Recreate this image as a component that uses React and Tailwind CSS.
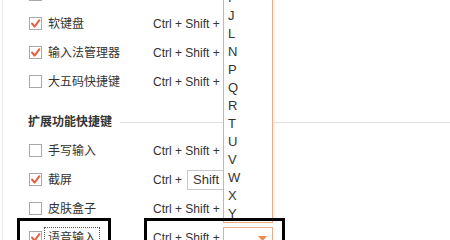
import React from "react";

const font = { fontFamily: '"Liberation Sans", Arial, "Noto Sans CJK SC", sans-serif' };

function Box({ checked }) {
  return (
    <span className="w-[13px] h-[13px] shrink-0 border border-[#a9a9a9] bg-white flex items-center justify-center">
      {checked && (
        <svg width="11" height="11" viewBox="0 0 11 11">
          <path d="M2 5.5 L4.6 8.6 L9.4 2.2" fill="none" stroke="#e8603f" strokeWidth="2" strokeLinecap="round" strokeLinejoin="round" />
        </svg>
      )}
    </span>
  );
}

function Row({ label, checked, keys, focus }) {
  return (
    <div className="h-[29px] flex items-center pl-[29px]">
      <Box checked={checked} />
      <span className="ml-[6px] w-[105px] text-[12px] text-[#333] leading-none">
        <span className={focus ? "outline outline-1 outline-dotted outline-[#555] outline-offset-[3px]" : ""}>{label}</span>
      </span>
      <span className="text-[12px] text-[#333] whitespace-nowrap flex items-center">{keys}</span>
    </div>
  );
}

const letters = ["I", "J", "L", "N", "P", "Q", "R", "T", "U", "V", "W", "X", "Y"];

export default function App() {
  return (
    <div className="relative w-[450px] h-[240px] overflow-hidden bg-white" style={font}>
      <div className="absolute left-[2px] top-0 bottom-0 w-px bg-[#ececec]" />

      <div className="-mt-[20px]">
        <Row label="" checked={false} keys="" />
        <Row label="软键盘" checked keys="Ctrl + Shift +" />
        <Row label="输入法管理器" checked keys="Ctrl + Shift +" />
        <Row label="大五码快捷键" checked={false} keys="Ctrl + Shift +" />

        <div className="h-[28px] mt-[12px] flex items-center pl-[28px]">
          <span className="text-[12px] font-bold text-[#333] leading-none">扩展功能快捷键</span>
          <span className="ml-[8px] flex-1 h-px bg-[#e0e0e0]" />
        </div>

        <Row label="手写输入" checked={false} keys="Ctrl + Shift +" />
        <Row
          label="截屏"
          checked
          keys={
            <>
              <span>Ctrl +</span>
              <span className="ml-[5px] h-[20px] w-[60px] border border-[#c8c8c8] flex items-center pl-[5px] text-[13px]">Shift +</span>
            </>
          }
        />
        <Row label="皮肤盒子" checked={false} keys="Ctrl + Shift +" />
        <Row label="语音输入" checked focus keys="Ctrl + Shift +" />
      </div>

      {/* open dropdown list */}
      <div className="absolute left-[223px] top-[-13px] w-[50px] border border-[#eeaa88] bg-white shadow-[2px_0_3px_rgba(240,230,200,0.5)]">
        {letters.map((l) => (
          <div key={l} className="h-[18px] flex items-center pl-[4px] text-[13px] text-[#333] leading-none">
            {l}
          </div>
        ))}
      </div>

      {/* select box */}
      <div className="absolute left-[223px] top-[227px] w-[50px] h-[20px] border border-[#eeaa88] bg-white">
        <svg className="absolute left-[34px] top-[8px]" width="9" height="5" viewBox="0 0 9 5">
          <path d="M0 0 L9 0 L4.5 5 Z" fill="#f08a4b" />
        </svg>
      </div>

      {/* annotation boxes */}
      <div className="absolute left-[17px] top-[218px] w-[94px] h-[40px] border-[3px] border-black" />
      <div className="absolute left-[144px] top-[218px] w-[141px] h-[40px] border-[3px] border-black" />
    </div>
  );
}
